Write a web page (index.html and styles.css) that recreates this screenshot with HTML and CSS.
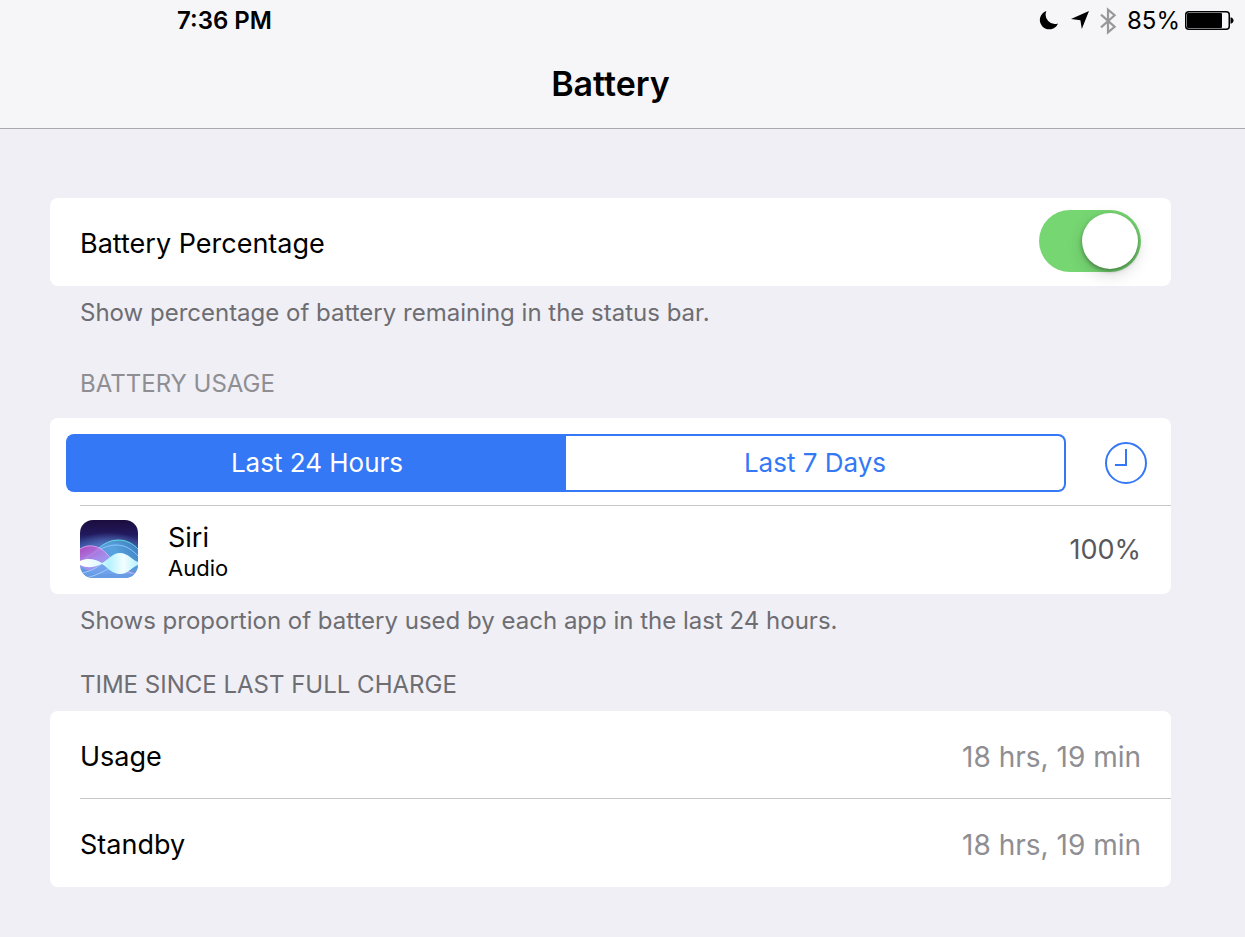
FILE: index.html
```
<!DOCTYPE html>
<html lang="en">

<head>
    <meta charset="UTF-8">
    <meta name="viewport" content="width=device-width, initial-scale=1.0">
    <title>Battery</title>
    <link rel="stylesheet" href="styles.css">
</head>

<body>

<header class="top-bar">
    <!-- Status bar -->
    <div class="status-bar">
        <time class="clock">7:36 PM</time>
        <div class="status-icons">
            <svg class="moon" width="20" height="20" viewBox="0 0 20 20" aria-hidden="true">
                <path d="M7.4 0A9.4 9.4 0 1 0 19 12.4A9.3 9.3 0 0 1 7.4 0z" fill="#000"/>
            </svg>
            <svg class="location" width="20" height="20" viewBox="0 0 20 20" aria-hidden="true">
                <path d="M19 0L11.8 18L10.4 9.2L1 8z" fill="#000"/>
            </svg>
            <svg class="bluetooth" width="18" height="28" viewBox="0 0 18 28" aria-hidden="true">
                <path d="M2 7.6L15.6 19.8L9 25.4V2.6L15.6 8.2L2 20.4" fill="none" stroke="#98989b" stroke-width="2.2"/>
            </svg>
            <span class="percent">85%</span>
            <svg class="battery" width="50" height="20" viewBox="0 0 50 20" aria-hidden="true">
                <rect x=".75" y=".75" width="43.5" height="17.5" rx="3" fill="none" stroke="#000" stroke-width="1.5"/>
                <rect x="2" y="2" width="35" height="15" rx="1" fill="#000"/>
                <path d="M45.5 6.2C49.6 7 49.6 12 45.5 12.8z" fill="#000"/>
            </svg>
        </div>
    </div>
    <h1 class="title">Battery</h1>
</header>

<main class="settings">

    <section>
        <div class="card">
            <div class="row">
                <label class="label" for="percentage">Battery Percentage</label>
                <input class="switch" type="checkbox" id="percentage" checked>
            </div>
        </div>
        <p class="note">Show percentage of battery remaining in the status bar.</p>
    </section>

    <!-- Usage by app -->
    <section>
        <h2 class="heading heading-usage">BATTERY USAGE</h2>
        <div class="card">
            <div class="row row-period">
                <div class="segments">
                    <button class="segment selected" type="button" aria-pressed="true">Last 24 Hours</button>
                    <button class="segment" type="button" aria-pressed="false">Last 7 Days</button>
                </div>
                <button class="clock-button" type="button" aria-label="Show time">
                    <svg width="44" height="44" viewBox="0 0 44 44" aria-hidden="true">
                        <circle cx="22" cy="22" r="20" fill="none" stroke="#3478f6" stroke-width="2"/>
                        <path d="M22 8V24H11" fill="none" stroke="#3478f6" stroke-width="2"/>
                    </svg>
                </button>
            </div>
            <div class="row">
                <svg class="app-icon" width="58" height="58" viewBox="0 0 58 58" aria-hidden="true">
                    <defs>
                        <linearGradient id="sky" x1="0" y1="0" x2="0" y2="1">
                            <stop offset="0" stop-color="#1b0c3c"/>
                            <stop offset=".25" stop-color="#221a5e"/>
                            <stop offset=".5" stop-color="#3b5aa8"/>
                            <stop offset=".8" stop-color="#6aa5e8"/>
                            <stop offset="1" stop-color="#5a7cc8"/>
                        </linearGradient>
                        <linearGradient id="pink" x1="0" y1="0" x2="1" y2="1">
                            <stop offset="0" stop-color="#d83fc4"/>
                            <stop offset=".4" stop-color="#b98af0"/>
                            <stop offset="1" stop-color="#7fb8fa"/>
                        </linearGradient>
                        <linearGradient id="teal" x1="0" y1="0" x2="1" y2="0">
                            <stop offset="0" stop-color="#6a94e8"/>
                            <stop offset=".6" stop-color="#57b4e4"/>
                            <stop offset="1" stop-color="#3f93d0"/>
                        </linearGradient>
                        <radialGradient id="glow">
                            <stop offset="0" stop-color="#6f9cf0" stop-opacity=".7"/>
                            <stop offset="1" stop-color="#6f9cf0" stop-opacity="0"/>
                        </radialGradient>
                        <linearGradient id="wave" x1="0" y1="0" x2="1" y2="0">
                            <stop offset="0" stop-color="#fff"/>
                            <stop offset=".3" stop-color="#e4fbff"/>
                            <stop offset=".5" stop-color="#b4f2ff"/>
                            <stop offset=".75" stop-color="#f4feff"/>
                            <stop offset="1" stop-color="#b5f2ff"/>
                        </linearGradient>
                        <clipPath id="tile">
                            <rect width="58" height="58" rx="13"/>
                        </clipPath>
                    </defs>
                    <g clip-path="url(#tile)">
                        <rect width="58" height="58" fill="url(#sky)"/>
                        <ellipse cx="29" cy="28" rx="34" ry="16" fill="url(#glow)"/>
                        <path d="M0 43C14 35 22 20 38 20C48 20 54 25 58 29V48C40 56 20 50 0 43z" fill="url(#teal)" opacity=".65"/>
                        <path d="M0 43C14 35 22 20 38 20C48 20 54 25 58 29" fill="none" stroke="#5fe0df" stroke-width="1"/>
                        <path d="M0 41C13 34 23 25 36 25C47 25 53 31 58 36" fill="none" stroke="#8cc4fa" stroke-width="1"/>
                        <path d="M0 29C9 23 19 26 26 33C34 42 44 53 58 54H18C10 52 4 49 0 46z" fill="url(#pink)" opacity=".75"/>
                        <path d="M0 29C9 23 19 26 26 33C34 42 44 53 58 54" fill="none" stroke="#e0b4f6" stroke-width=".8"/>
                        <path d="M0 52C10 52 16 48 22 43.5C34 52 48 56 58 53V58H0z" fill="#6aa3ea" opacity=".8"/>
                        <path d="M0 53C10 52 16 48 22 43.5M6 58C18 55 24 51 30 48" fill="none" stroke="#a9d8ff" stroke-width=".8"/>
                        <path d="M0 41C8 37.5 15 39 22 43C27 41 32 33 40 33C48 33 52 40 58 42V45C52 47 48 54 40 54C32 54 27 47 22 44C15 47 8 49 0 45z" fill="url(#wave)"/>
                    </g>
                </svg>
                <div class="app-name">
                    <span>Siri</span>
                    <span class="app-detail">Audio</span>
                </div>
                <span class="app-share">100%</span>
            </div>
        </div>
        <p class="note">Shows proportion of battery used by each app in the last 24 hours.</p>
    </section>

    <!-- Time since the last charge -->
    <section>
        <h2 class="heading heading-charge">TIME SINCE LAST FULL CHARGE</h2>
        <div class="card">
            <div class="row">
                <span class="label">Usage</span>
                <span class="value">18 hrs, 19 min</span>
            </div>
            <div class="row">
                <span class="label">Standby</span>
                <span class="value">18 hrs, 19 min</span>
            </div>
        </div>
    </section>

</main>

</body>

</html>
```
FILE: styles.css
```
* {
    box-sizing: border-box;
}

body {
    margin: 0;
    min-height: 100vh;
    background-color: #efeff5;
    color: #000;
    font-family: Inter, "Liberation Sans", sans-serif;
    font-size: 27px;
    line-height: 32px;
}

/* Top bar */

.top-bar {
    background-color: #f6f6f8;
    border-bottom: 1px solid #a9a9b0;
}

.status-bar {
    display: flex;
    justify-content: space-between;
    align-items: center;
    height: 42px;
    padding: 0 10px 0 177px;
    font-size: 24px;
}

.clock {
    font-weight: 600;
}

.status-icons {
    display: flex;
    align-items: center;
}

.location {
    margin: 0 9px 0 11px;
}

.percent {
    margin: 0 5px 0 10px;
}

.title {
    margin: 0;
    padding: 22px 74px 24px 50px;
    font-size: 34px;
    font-weight: 600;
    line-height: 40px;
    text-align: center;
}

/* Settings list */

.settings {
    padding: 69px 74px 50px 50px;
}

.card {
    background-color: #fff;
    border-radius: 8px;
}

.row {
    position: relative;
    display: flex;
    align-items: center;
    height: 88px;
    padding: 0 30px 2px;
}

/* the divider starts at the text, not at the card edge */
.row:not(:last-child)::after {
    content: "";
    position: absolute;
    left: 30px;
    right: 0;
    bottom: 0;
    border-bottom: 1px solid #c8c7cc;
}

.label,
.value {
    padding-top: 6px;
}

.value {
    margin-left: auto;
    color: #8e8e93;
    font-size: 28px;
}

.note {
    margin: 0;
    padding: 12px 30px 0;
    color: #6d6d72;
    font-size: 24px;
    line-height: 30px;
}

.heading {
    margin: 0;
    color: #6d6d72;
    font-size: 24px;
    font-weight: 400;
    line-height: 30px;
}

.heading-usage {
    padding: 41px 30px 19px;
    color: #8e8e93;
}

.heading-charge {
    padding: 34px 30px 11px;
}

/* Switch */

.switch {
    appearance: none;
    display: flex;
    width: 102px;
    height: 62px;
    margin: 0 0 0 auto;
    padding: 3px;
    border-radius: 31px;
    background-color: #d8d8dc;
    cursor: pointer;
}

.switch::before {
    content: "";
    width: 56px;
    height: 56px;
    border-radius: 50%;
    background-color: #fff;
    box-shadow: 0 2px 4px rgba(0, 0, 0, .35), 0 6px 16px rgba(0, 0, 0, .15);
}

.switch:checked {
    justify-content: flex-end;
    background-color: #76d672;
}

/* Period picker */

.row-period {
    gap: 38px;
    padding: 2px 23px 0 16px;
}

.segments {
    display: flex;
    flex: 1;
    height: 58px;
}

.segment {
    flex: 1;
    padding: 0;
    border: 2px solid #3478f6;
    background-color: #fff;
    color: #3478f6;
    font: inherit;
    font-size: 26px;
    cursor: pointer;
}

.segment:first-child {
    border-right: none;
    border-radius: 8px 0 0 8px;
}

.segment:last-child {
    border-left: none;
    border-radius: 0 8px 8px 0;
}

.segment.selected {
    background-color: #3478f6;
    color: #fff;
}

.clock-button {
    display: flex;
    padding: 0;
    border: none;
    background: none;
    cursor: pointer;
}

/* App row */

.app-icon {
    margin-right: 30px;
}

.app-name {
    display: flex;
    flex-direction: column;
    padding-top: 5px;
}

.app-detail {
    font-size: 22px;
    line-height: 28px;
}

.app-share {
    margin-left: auto;
    padding-top: 2px;
    color: #58585c;
}
```
